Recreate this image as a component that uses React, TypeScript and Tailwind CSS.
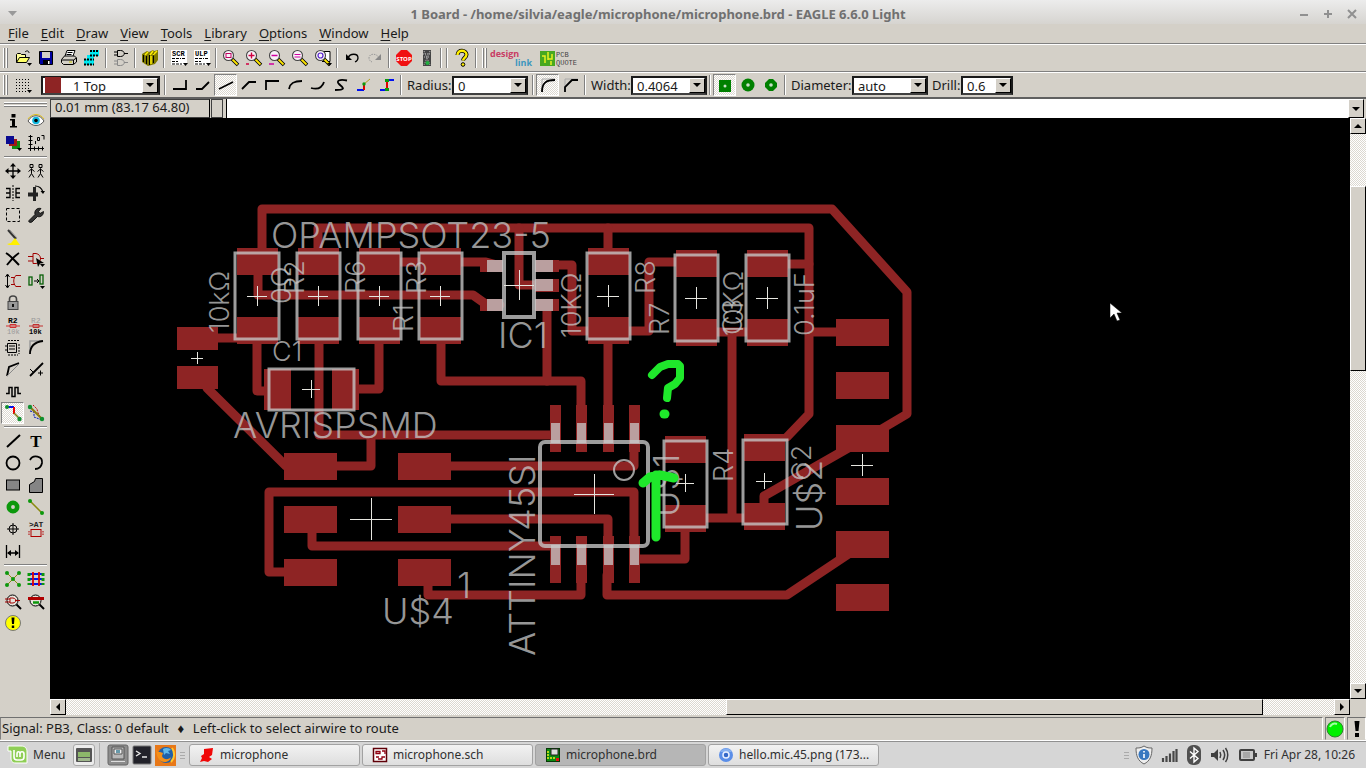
import type { ReactNode } from 'react';

const raised = 'border border-t-white border-l-white border-r-black border-b-black bg-[#d4d0c8]';
const dither = 'bg-[repeating-conic-gradient(#ffffff_0%_25%,#dcd8d0_0%_50%)] bg-[length:2px_2px]';

function Icon({ children }: { children: ReactNode }) {
  return (
    <svg width="20" height="20" viewBox="0 0 20 20" fill="none" stroke="#000" className="shrink-0" aria-hidden="true">
      {children}
    </svg>
  );
}

function ToolButton({ label, active, children }: { label: string; active?: boolean; children: ReactNode }) {
  return (
    <button
      type="button"
      aria-label={label}
      className={
        'flex h-[22px] w-[23px] shrink-0 items-center justify-center ' +
        (active ? 'border border-t-[#808080] border-l-[#808080] border-r-white border-b-white ' + dither : '')
      }
    >
      <Icon>{children}</Icon>
    </button>
  );
}

function Sep() {
  return (
    <div className="flex w-[6px] shrink-0 justify-center">
      <div className="h-5 border-l border-l-[#808080] border-r border-r-white"></div>
    </div>
  );
}

function Handle() {
  return (
    <div className="flex h-5 w-[11px] shrink-0 gap-px pl-[3px]">
      <div className="w-[2px] border-r border-r-[#808080] bg-white"></div>
      <div className="w-[2px] border-r border-r-[#808080] bg-white"></div>
    </div>
  );
}

function Combo({ id, label, value, width, swatch }: { id: string; label: string; value: string; width: string; swatch?: boolean }) {
  return (
    <div className={'flex h-[19px] shrink-0 items-center border-2 border-[#1a1a1a] border-b-[#404040] bg-white ' + width}>
      {swatch && <span className="ml-[2px] h-4 w-4 shrink-0 bg-[#8e2424]"></span>}
      <select
        id={id}
        aria-label={label}
        className={'h-full min-w-0 flex-1 appearance-none bg-transparent outline-none ' + (swatch ? 'pl-3' : 'pl-1')}
      >
        <option>{value}</option>
      </select>
      <span className={'flex h-full w-4 shrink-0 items-center justify-center ' + raised}>
        <svg width="8" height="4" viewBox="0 0 8 4" aria-hidden="true"><path d="M0 0h8L4 4z" /></svg>
      </span>
    </div>
  );
}

function Lens({ children }: { children?: ReactNode }) {
  return (
    <>
      <path d="M11 11l6 6" stroke="#000" strokeWidth="3.6" />
      <path d="M11.5 11.5l5 5" stroke="#ffe600" strokeWidth="1.8" />
      <circle cx="7.5" cy="7.5" r="5" fill="#f8f2f8" stroke="#444" strokeWidth="1.1" />
      {children}
    </>
  );
}

const dropMark = <path d="M14 15h5l-2.5 3z" fill="#000" stroke="none" />;

const fileTools: { label: string; art: ReactNode }[][] = [
  [
    { label: 'Open', art: <><path d="M3.5 14.5v-8l1-1h3l1 1h4v2.5" fill="#ffff99" /><path d="M3.5 14.5l3-5h10l-3 5z" fill="#ffff66" /><path d="M12 4c2-2 4-1 4 1" />{dropMark}</> },
    { label: 'Save', art: <><path d="M3.5 3.500h13v13h-12l-1-1z" fill="#0000a0" /><path d="M6 4h8v6H6z" fill="#d4d0c8" stroke="none" /><path d="M7 12h7v4H7z" fill="#000" stroke="none" /><path d="M12 13h1.5v3H12z" fill="#fff" stroke="none" /></> },
    { label: 'Print', art: <><path d="M6 8l2-5.500h8L14 8" fill="#fff" /><path d="M2.500 11.500l3-3.500h10l2 2v4l-3 2.500h-10l-2-2z" fill="#d4d0c8" /><path d="M3 12h11.500l3-2M14.500 12v4M8.500 4.500h5M7.500 6.500h5" /><path d="M10 14h3" stroke="#c8c800" /></> },
    { label: 'CAM Processor', art: <><path d="M8 2h9v6H8zM2 11h10v6H2zM5 7h7v4H5z" fill="#00e8f0" stroke="none" /><path d="M8 3h9M8 7.500h9M2 11.500h10M2 16.500h10" strokeWidth="2" strokeDasharray="2 1" /></> },
  ],
  [{ label: 'Schematic', art: <><path d="M6.500 2.500h3c5 0 5 6 0 6h-3zM3 4h3M3 7h3M13 5.500h4" /><path d="M6.500 11.500h3c5 0 5 6 0 6h-3zM3 13h3M3 16h3M13 14.500h4" stroke="#888" /></> }],
  [{ label: 'Library', art: <><path d="M2 6l5-3 2 1 4-2 1 1 4-1v10l-3 4-7 2-6-4z" fill="#807a00" stroke="none" /><path d="M3.500 7v7M6.500 8v8M9.500 7v10M13.500 5v10" /><path d="M8 4l-3 3M13 3l-3 4M17 3l-4 4M11 8v8" stroke="#ffee00" strokeWidth="1.500" /></> }],
  [
    { label: 'Run script', art: <><rect x="2" y="2" width="16" height="15" fill="#fff" stroke="none" /><text x="3" y="8" fontSize="7" fontWeight="700" fill="#000" stroke="none" fontFamily="Liberation Mono, monospace">SCR</text><path d="M3 10.500h9M13 10.500h3M3 13.500h6M3 16h10" strokeDasharray="3 1" />{dropMark}</> },
    { label: 'Run ULP', art: <><rect x="2" y="2" width="16" height="15" fill="#fff" stroke="none" /><text x="3" y="8" fontSize="7" fontWeight="700" fill="#000" stroke="none" fontFamily="Liberation Mono, monospace">ULP</text><path d="M3 10.500h9M13 10.500h3M3 13.500h6M3 16h10" strokeDasharray="3 1" />{dropMark}</> },
  ],
  [
    { label: 'Zoom to fit', art: <Lens><rect x="5" y="5.500" width="5" height="4" stroke="#c00060" /></Lens> },
    { label: 'Zoom in', art: <Lens><path d="M7.500 4.500v6M4.500 7.500h6M2 16h3" stroke="#d00040" strokeWidth="1.400" /></Lens> },
    { label: 'Zoom out', art: <Lens><path d="M4.500 7.500h6M2 16h5" stroke="#d000a0" strokeWidth="1.400" /></Lens> },
    { label: 'Zoom redraw', art: <Lens><path d="M4.500 6.500h6M4.500 9h6" stroke="#d000a0" strokeWidth="1.200" /></Lens> },
    { label: 'Zoom select', art: <><path d="M9 3.500h8v10H9" fill="#fff" /><Lens><circle cx="7.500" cy="7.500" r="2.500" stroke="#5522cc" strokeWidth="1.200" /></Lens>{dropMark}</> },
  ],
  [
    { label: 'Undo', art: <><path d="M6 10c2-5 10-5 10 0 0 2-1 3-3 4" strokeWidth="1.300" /><path d="M4 6v6h6z" fill="#000" stroke="none" /></> },
    { label: 'Redo', art: <><path d="M14 10c-2-5-10-5-10 0 0 2 1 3 3 4" stroke="#999" strokeDasharray="1.500 1" /><path d="M16 6v6h-6z" fill="#888" stroke="none" /></> },
  ],
  [
    { label: 'Stop', art: <><path d="M7 2h6l5 5v6l-5 5H7l-5-5V7z" fill="#f01010" stroke="none" /><text x="10" y="12.500" textAnchor="middle" fontSize="6" fontWeight="700" fill="#fff" stroke="none" fontFamily="Open Sans, sans-serif">STOP</text></> },
    { label: 'Go', art: <><rect x="6" y="2" width="8" height="16" fill="#444" stroke="none" /><path d="M7 3l6 14M13 3L7 17M7 9h6M6 6h8" stroke="#bbb" strokeDasharray="1 1" /><circle cx="10.500" cy="15" r="2" fill="#22b040" stroke="none" /></> },
  ],
];

const wireTools: { label: string; d: string }[] = [
  { label: 'Wire bend 0', d: 'M3 14h13V5' },
  { label: 'Wire bend 1', d: 'M3 14h6l7-7' },
  { label: 'Wire bend 2', d: 'M3 14l14-7' },
  { label: 'Wire bend 3', d: 'M3 14l7-7h7' },
  { label: 'Wire bend 4', d: 'M4 15V6h13' },
  { label: 'Wire bend 5', d: 'M4 14c1-6 5-8 13-8' },
  { label: 'Wire bend 6', d: 'M3 13c7 2 11 0 13-6' },
  { label: 'Freehand', d: 'M16 5.500C8 4 5 6 8 9s9 6-4 6' },
];

const sideTools: { label: string; art: ReactNode; active?: boolean }[][] = [
  [
    { label: 'Info', art: <><rect x="8.500" y="3" width="4" height="3.500" fill="#000" stroke="none" /><path d="M7 8h5v7h2v1.500H7V15h2V9.500H7z" fill="#000" stroke="none" /></> },
    { label: 'Show', art: <><path d="M2 10c4-7 12-7 16 0-4 6-12 6-16 0z" fill="#fff" stroke="#555" /><path d="M2 8c4-6 12-6 16 0" stroke="#e0c020" /><circle cx="10" cy="9.500" r="3.800" fill="#10b8e0" stroke="none" /><circle cx="10" cy="9.500" r="1.800" fill="#000" stroke="none" /></> },
    { label: 'Display layers', art: <><rect x="9" y="8" width="8" height="8" fill="#128a12" stroke="none" /><rect x="6" y="6" width="8" height="7" fill="#a01818" stroke="none" /><rect x="3" y="3" width="8" height="8" fill="#0a0a90" stroke="none" />{dropMark}</> },
    { label: 'Mark', art: <><path d="M4.500 2v16M2.500 3.500h4M2.500 7.500h4M2.500 11.500h4M2 15.500h16M8.500 13.500v4M12.500 13.500v4M16.500 13.500v4" /><path d="M9.500 8v3M11.500 4.500h2v3h-2zM15.500 2.500h2.500v4" /></> },
  ],
  [
    { label: 'Move', art: <><path d="M10 4v12M4 10h12" strokeWidth="1.300" /><path d="M10 2l3 3.500H7zM10 18l3-3.500H7zM2 10l3.500 3V7zM18 10l-3.500 3V7z" fill="#000" stroke="none" /></> },
    { label: 'Copy', art: <path d="M5.500 7.500v5l-2.500 4M5.500 12.500l2.500 4M2.500 10.500L5.500 8l3 2.500M14.500 7.500v5l-2.500 4M14.500 12.500l2.500 4M11.500 10.500l3-2.500 3 2.500M4 3.500h3v3H4zM13 3.500h3v3h-3z" /> },
    { label: 'Mirror', art: <><path d="M3 5.500h4v9H3M3 10h4M17 5.500h-4v9h4M17 10h-4" strokeWidth="1.300" /><path d="M10 2v16" strokeDasharray="2 1" /></> },
    { label: 'Rotate', art: <><path d="M2 9.500h10v4H2z" fill="#222" stroke="none" /><path d="M7 4h3v14H7z" fill="#222" stroke="none" /><path d="M9 3c5 0 7 3 8 6" strokeWidth="1.200" /><path d="M14.500 8h4.500l-2 3z" fill="#000" stroke="none" /></> },
    { label: 'Group', art: <rect x="3.500" y="3.500" width="13" height="13" strokeDasharray="3 2" /> },
    { label: 'Change', art: <path d="M3 15.500l6-6c-1-4 2-7 6-6l-2.500 3 1.500 2 3.500-2c0 4-3 6-6 5L6 17c-2 1-4 0-3-1.500z" fill="#333" strokeWidth=".8" /> },
    { label: 'Paste', art: <><path d="M5 3l8 9" stroke="#333" strokeWidth="2" /><path d="M7 3l7 8" stroke="#999" /><path d="M4 17l4-1 4-5 5 7H6z" fill="#fff000" stroke="none" /></> },
    { label: '', art: null },
    { label: 'Delete', art: <path d="M3 4c5 3 8 7 13 12M16 4C11 7 8 11 4 16" strokeWidth="2" /> },
    { label: 'Add', art: <><path d="M7 4.500h3c6 1 6 9 0 10H7zM2 7.500h5M2 12h5M14 9.500h4" stroke="#a00000" /><path d="M10 9l8 5-4 .5-2 3.500z" fill="#000" stroke="none" />{dropMark}</> },
    { label: 'Pinswap', art: <><path d="M4.500 4v12M2.500 6l2-3 2 3M2.500 14l2 3 2-3" /><path d="M18 4.500h-5c-3 2-3 9 0 11h5M8 6.500h4M8 13.500h4" stroke="#a00000" /></> },
    { label: 'Replace', art: <><rect x="3" y="6" width="3" height="8" stroke="#075f07" strokeWidth="1.300" /><rect x="14" y="4" width="3" height="9" stroke="#075f07" strokeWidth="1.300" /><path d="M8 10h5M11 8l2 2-2 2" />{dropMark}</> },
    { label: 'Lock', art: <><path d="M6.500 9V6c0-4 7-4 7 0v3" stroke="#444" strokeWidth="1.600" /><rect x="5" y="8.500" width="10" height="8" fill="#999" stroke="#444" /><path d="M10 11v3" stroke="#111" strokeWidth="2" /></> },
    { label: '', art: null },
    { label: 'Name', art: <><text x="5" y="8" fontSize="8" fontWeight="700" fill="#000" stroke="none" fontFamily="Liberation Mono, monospace">R2</text><path d="M3 11h14M7 9.500h6v3H7z" stroke="#d03030" /><text x="4" y="19" fontSize="7" fill="#999" stroke="none" fontFamily="Liberation Mono, monospace">10k</text></> },
    { label: 'Value', art: <><text x="5" y="8" fontSize="8" fill="#999" stroke="none" fontFamily="Liberation Mono, monospace">R2</text><path d="M3 11h14M7 9.500h6v3H7z" stroke="#c03030" /><text x="3" y="19" fontSize="7" fontWeight="700" fill="#000" stroke="none" fontFamily="Liberation Mono, monospace">10k</text></> },
    { label: 'Smash', art: <><path d="M4.500 6.500h9v9h-9zM4 9h-2M4 13h-2M6 9h6M6 12h6" /><path d="M5 3.500h11M16 7v10M5 18h10" strokeDasharray="2 1" /></> },
    { label: 'Miter', art: <><path d="M4 17V4h13" stroke="#999" strokeWidth="1.500" /><path d="M4 17C4 9 9 5 17 4" strokeWidth="1.800" /></> },
    { label: 'Split', art: <><path d="M4 17l2-9 10-4" strokeWidth="1.800" /><path d="M4 17L16 5" stroke="#888" /></> },
    { label: 'Optimize', art: <><path d="M4 17L17 4" strokeWidth="1.800" /><path d="M4 10l3 3M12 14h5M14.500 11.500v5" /></> },
    { label: 'Meander', art: <path d="M3 12.500h3v-6h3v9h3v-9h3v6h3" strokeWidth="1.500" /> },
    { label: '', art: null },
    { label: 'Route', active: true, art: <><path d="M4 4h7" stroke="#0010f0" strokeWidth="2" /><path d="M11 4v7" stroke="#f00000" strokeWidth="2" /><path d="M11 10l6 6" stroke="#7a7a10" strokeWidth="1.500" /><circle cx="4" cy="4" r="2" fill="#109030" stroke="none" /><circle cx="16.500" cy="16" r="2.200" fill="#109030" stroke="none" /></> },
    { label: 'Ripup', art: <><path d="M4 8l4 1v5l8 3" stroke="#0010c0" strokeDasharray="2 1" /><path d="M7 2l4 4 1 4 3 5" stroke="#c01010" strokeDasharray="2 1" /><path d="M4 4l12 12" stroke="#8a7a10" strokeWidth="2" /><circle cx="4" cy="4" r="2.200" fill="#109030" stroke="none" /><circle cx="16" cy="16" r="2.200" fill="#109030" stroke="none" /></> },
  ],
  [
    { label: 'Wire', art: <path d="M4 16L17 4" strokeWidth="2" /> },
    { label: 'Text', art: <text x="10" y="16" textAnchor="middle" fontSize="17" fontWeight="700" fill="#000" stroke="none" fontFamily="Liberation Serif, serif">T</text> },
    { label: 'Circle', art: <circle cx="10" cy="10" r="6.500" strokeWidth="1.800" /> },
    { label: 'Arc', art: <path d="M4 7c3-6 13-4 12 3-1 5-5 6-7 6" strokeWidth="1.800" /> },
    { label: 'Rect', art: <rect x="3.500" y="5" width="13" height="10" fill="#858585" /> },
    { label: 'Polygon', art: <path d="M3.500 17.500v-8l5-3 1-3h7v14z" fill="#858585" /> },
    { label: 'Via', art: <circle cx="10" cy="10" r="4.200" stroke="#0c980c" strokeWidth="4.500" /> },
    { label: 'Signal', art: <><path d="M4 4l12 12" stroke="#8a8a10" strokeWidth="1.500" /><circle cx="4" cy="4" r="2" fill="#0c980c" stroke="none" /><circle cx="16" cy="16" r="2" fill="#0c980c" stroke="none" /></> },
    { label: 'Hole', art: <><circle cx="10" cy="10" r="4" /><path d="M10 4v12M4 10h12" /></> },
    { label: 'Attribute', art: <><text x="3" y="8" fontSize="8" fontWeight="700" fill="#222" stroke="none" fontFamily="Liberation Mono, monospace">&gt;AT</text><rect x="5" y="10.500" width="10" height="7" stroke="#b00000" /><path d="M3 12v5M17 12v5" stroke="#b00000" strokeDasharray="1.500 1" /></> },
    { label: 'Dimension', art: <><path d="M3.500 4v13M16.500 4v13M5 12h10" strokeWidth="1.300" /><path d="M4 12l4-3v6zM16 12l-4-3v6z" fill="#000" stroke="none" /></> },
    { label: '', art: null },
  ],
  [
    { label: 'Ratsnest', art: <><path d="M4 4l12 12M16 4L4 16" stroke="#8a8a10" />{[[4, 4], [16, 4], [10, 10], [4, 16], [16, 16]].map(([x, y]) => <circle key={x + '-' + y} cx={x} cy={y} r="2" fill="#0c980c" stroke="none" />)}</> },
    { label: 'Auto', art: <><path d="M3 5h14M3 10h14M3 15h14" stroke="#0010f0" strokeWidth="1.800" /><path d="M7 3v14M13 3v14" stroke="#e00000" strokeWidth="1.800" /><path d="M3 4v12M17 4v12" stroke="#0c980c" strokeWidth="3" strokeDasharray="3 2" /></> },
    { label: 'ERC', art: <><path d="M13 13l5 5" strokeWidth="2" /><circle cx="9.500" cy="9.500" r="5.500" fill="#e8e4dc" /><path d="M7 7h3c4 1 4 4 0 5H7zM2 8h5M2 11h5M12 9.500h5" stroke="#a00000" /></> },
    { label: 'DRC', art: <><path d="M13 13l5 5" strokeWidth="2" /><circle cx="9.500" cy="9.500" r="5.500" fill="#e8e4dc" /><path d="M2 7.500h16" stroke="#b00000" strokeWidth="3" /><path d="M7 11.500h6" stroke="#0c980c" strokeWidth="2.500" /></> },
    { label: 'Errors', art: <><circle cx="10" cy="10" r="7.500" fill="#ffff00" stroke="#777" /><path d="M8.500 4.500h3l-.5 6.500H9zM8.800 12.500h2.400v2.400H8.800z" fill="#000" stroke="none" /></> },
    { label: '', art: null },
  ],
];

const traces = [
  'M262 252V209H832L907 292V414L880 430',
  'M318 252V228H809V414L787 437',
  'M608 228V252M519 228V285H550',
  'M258 270V295H473L487 305H500',
  'M395 262H425M455 262H486L497 265',
  'M545 265H572V331H590M547 307V381',
  'M441 340V381H581V410M608 340V420',
  'M628 331H649V262H678',
  'M715 332H750M732 332V518M704 518H748',
  'M787 264H809M809 332H840',
  'M215 338H238M257 340V391H268M379 340V389H357',
  'M319 340V435H552M371 436V466H335',
  'M207 384V388L286 466',
  'M449 466H634V445',
  'M286 572H269V492H634V545',
  'M449 519H608V545',
  'M312 530V546H555',
  'M428 583V595H581V575',
  'M607 575V595H787L850 553',
  'M636 559H685V528',
  'M850 447L764 496V508',
];

// x, y, width, height
const pads = [
  [177, 327, 41, 23], [177, 366, 41, 23],
  [237, 248, 41, 27], [237, 317, 41, 27], [298, 248, 41, 27], [298, 317, 41, 27],
  [359, 248, 41, 27], [359, 317, 41, 27], [420, 248, 41, 27], [420, 317, 41, 27],
  [588, 248, 41, 27], [588, 317, 41, 27], [676, 250, 41, 27], [676, 319, 41, 27],
  [747, 250, 41, 27], [747, 319, 41, 27], [264, 369, 27, 41], [332, 369, 27, 41],
  [665, 436, 41, 27], [665, 505, 41, 27], [744, 434, 41, 27], [744, 503, 41, 27],
  [284, 453, 53, 27], [284, 506, 53, 27], [284, 559, 53, 27],
  [398, 453, 53, 27], [398, 506, 53, 27], [398, 559, 53, 27],
  [836, 319, 53, 27], [836, 372, 53, 27], [836, 425, 53, 27], [836, 478, 53, 27], [836, 531, 53, 27], [836, 584, 53, 27],
  [480, 260, 23, 12], [480, 299, 23, 12], [535, 260, 24, 12], [535, 279, 24, 13], [535, 299, 24, 12],
  [550, 405, 11, 47], [576, 405, 11, 47], [603, 405, 11, 47], [629, 405, 11, 47],
  [550, 536, 11, 47], [576, 536, 11, 47], [603, 536, 11, 47], [629, 536, 11, 47],
];

const pins = [
  [487, 260, 16, 12], [487, 299, 16, 12], [535, 260, 18, 12], [535, 279, 18, 12], [535, 299, 18, 12],
  [551, 423, 9, 20], [577, 423, 9, 20], [604, 423, 9, 20], [630, 423, 9, 20],
  [551, 545, 9, 20], [577, 545, 9, 20], [604, 545, 9, 20], [630, 545, 9, 20],
];

const outlines = [
  [235, 253, 44, 86], [297, 253, 43, 86], [358, 253, 43, 86], [419, 253, 43, 86],
  [587, 253, 43, 86], [675, 255, 43, 86], [746, 255, 43, 86], [269, 369, 85, 41],
  [664, 441, 43, 86], [743, 440, 44, 84],
];

// x, y, arm length
const crosses = [
  [257, 296, 10], [318, 296, 10], [379, 296, 10], [440, 296, 10], [197, 358, 6], [311, 389, 9],
  [519, 285, 15], [608, 296, 11], [696, 298, 11], [767, 298, 11], [594, 494, 20], [371, 519, 21],
  [685, 483, 9], [764, 481, 8], [862, 465, 11],
];

const labels: { text: string; x: number; y: number; size: number; up?: boolean }[] = [
  { text: 'OPAMPSOT23-5', x: 271, y: 248, size: 36 },
  { text: 'AVRISPSMD', x: 233, y: 438, size: 36 },
  { text: 'IC1', x: 498, y: 348, size: 36 },
  { text: 'U$4', x: 382, y: 624, size: 36 },
  { text: '1', x: 457, y: 598, size: 36 },
  { text: 'C1', x: 272, y: 361, size: 27 },
  { text: 'ATTINY45SI', x: 535, y: 656, size: 36, up: true },
  { text: '10kΩ', x: 229, y: 333, size: 27, up: true },
  { text: '0Ω', x: 291, y: 304, size: 27, up: true },
  { text: 'R2', x: 304, y: 294, size: 27, up: true },
  { text: 'R6', x: 365, y: 294, size: 27, up: true },
  { text: 'R3', x: 426, y: 294, size: 27, up: true },
  { text: 'R1', x: 413, y: 332, size: 27, up: true },
  { text: '10KΩ', x: 581, y: 338, size: 27, up: true },
  { text: 'R8', x: 655, y: 294, size: 27, up: true },
  { text: 'R7', x: 669, y: 335, size: 27, up: true },
  { text: '10KΩ', x: 743, y: 336, size: 27, up: true },
  { text: 'C3', x: 742, y: 335, size: 27, up: true },
  { text: '0.1uF', x: 814, y: 336, size: 27, up: true },
  { text: 'R4', x: 733, y: 482, size: 27, up: true },
  { text: 'U$1', x: 679, y: 517, size: 36, up: true },
  { text: 'C2', x: 811, y: 481, size: 27, up: true },
  { text: 'U$2', x: 822, y: 531, size: 36, up: true },
];

function Board() {
  return (
    <svg viewBox="50 118 1300 581" preserveAspectRatio="xMinYMin meet" className="h-full w-full" role="img" aria-label="Board layout">
      <g fill="none" stroke="#8e2424" strokeWidth="9" strokeLinecap="round" strokeLinejoin="round">
        {traces.map((d) => <path key={d} d={d} />)}
      </g>
      <g fill="#8e2424">
        {pads.map(([x, y, w, h], i) => <rect key={i} x={x} y={y} width={w} height={h} />)}
      </g>
      <g fill="#c8c8c8" fillOpacity=".75">
        {pins.map(([x, y, w, h], i) => <rect key={i} x={x} y={y} width={w} height={h} />)}
      </g>
      <g fill="none" stroke="#c8c8c8" strokeOpacity=".78" strokeWidth="3">
        {outlines.map(([x, y, w, h], i) => <rect key={i} x={x} y={y} width={w} height={h} />)}
        <rect x="504" y="253" width="30" height="64" strokeWidth="4" />
        <rect x="540" y="442" width="108" height="104" rx="5" strokeWidth="4" />
        <circle cx="624" cy="470" r="10" strokeWidth="2" />
      </g>
      <g stroke="#e6e6e0" strokeWidth="1" shapeRendering="crispEdges">
        {crosses.map(([x, y, r], i) => <path key={i} d={`M${x - r} ${y}H${x + r}M${x} ${y - r}V${y + r}`} />)}
      </g>
      <g fill="#c8c8c8" fillOpacity=".75" fontFamily="Inter, 'Liberation Sans', sans-serif" fontWeight="300">
        {labels.map((l, i) => (
          <text key={i} x={l.x} y={l.y} fontSize={l.size} transform={l.up ? `rotate(-90 ${l.x} ${l.y})` : undefined}>
            {l.text}
          </text>
        ))}
      </g>
      <g fill="none" stroke="#1fe82b" strokeWidth="8" strokeLinecap="round" strokeLinejoin="round">
        <path d="M652 375L660 367L668 364H678L680 366V378L675 384L668 388L667 398" />
        <path d="M656 537V475M643 483L650 477L660 475L674 478" strokeWidth="9" />
        <path d="M664 414h1" strokeWidth="9" />
      </g>
      <path d="M1110 303v15l4-4 3 7 3-1-3-7h5z" fill="#fff" stroke="#000" strokeWidth=".5" />
    </svg>
  );
}

const menus = ['File', 'Edit', 'Draw', 'View', 'Tools', 'Library', 'Options', 'Window', 'Help'];

function TaskButton({ label, active, children }: { label: string; active?: boolean; children: ReactNode }) {
  return (
    <button
      type="button"
      className={
        'flex h-[22px] w-[171px] items-center gap-[3px] rounded-[3px] border border-[#a2a2a2] pl-[7px] ' +
        (active ? 'bg-[#b6b6b6]' : 'bg-linear-to-b from-[#f2f2f2] to-[#dedede]')
      }
    >
      <Icon>{children}</Icon>
      <span className="whitespace-nowrap">{label}</span>
    </button>
  );
}

export default function App() {
  return (
    <div className="flex h-screen flex-col overflow-hidden bg-[#d4d0c8] font-['Noto_Sans',sans-serif] text-[13px] leading-4 text-[#1a1a1a]">
      {/* Title bar */}
      <header className="flex h-6 shrink-0 items-center bg-linear-to-b from-[#ececec] to-[#d6d4d0] px-2 pt-[3px] text-[#707070]">
        <svg width="10" height="6" viewBox="0 0 10 6" fill="#999" aria-hidden="true"><path d="M0 0h9L4.500 5z" /></svg>
        <h1 className="flex-1 pr-4 pl-4 text-center font-bold">1 Board - /home/silvia/eagle/microphone/microphone.brd - EAGLE 6.6.0 Light</h1>
        <div className="flex gap-3">
          {[
            ['Minimize', 'M2 7h8'],
            ['Maximize', 'M2 6h8M6 2v8'],
            ['Close', 'M2 2l8 8M10 2l-8 8'],
          ].map(([label, d]) => (
            <button key={label} type="button" aria-label={label}>
              <svg width="12" height="12" viewBox="0 0 12 12" stroke="#909090" strokeWidth="2"><path d={d} /></svg>
            </button>
          ))}
        </div>
      </header>

      {/* Menu bar */}
      <nav className="flex h-5 shrink-0 items-center gap-3 border-b border-b-[#808080] pb-[2px] pl-2">
        {menus.map((m) => (
          <button key={m} type="button"><span className="underline underline-offset-2">{m[0]}</span>{m.slice(1)}</button>
        ))}
      </nav>

      {/* Action toolbar */}
      <div className="flex h-7 shrink-0 items-center border-t border-t-white border-b border-b-[#808080]">
        <Handle />
        {fileTools.map((group, i) => (
          <div key={i} className="flex items-center">
            {i > 0 && <Sep />}
            {group.map((t) => <ToolButton key={t.label} label={t.label}>{t.art}</ToolButton>)}
          </div>
        ))}
        <Sep />
        <Sep />
        <ToolButton label="Help">
          <path d="M5.500 7c0-6 9-5 9-.5 0 3-3 3-3.500 6" stroke="#000" strokeWidth="4" />
          <path d="M5.500 7c0-6 9-5 9-.5 0 3-3 3-3.500 6" stroke="#ffee00" strokeWidth="2.400" />
          <circle cx="11" cy="16.500" r="1.800" fill="#ffee00" />
        </ToolButton>
        <Sep />
        <Handle />
        <a href="#designlink" aria-label="design link">
          <svg width="44" height="24" viewBox="0 0 44 24" fontFamily="Open Sans, sans-serif" fontWeight="700" fontSize="9">
            <text x="0" y="11" fill="#c83c64">design</text>
            <text x="25" y="20" fill="#3c96be">link</text>
          </svg>
        </a>
        <a href="#pcbquote" aria-label="PCB Quote" className="ml-[6px]">
          <svg width="38" height="20" viewBox="0 0 38 20">
            <rect x="0" y="3" width="15" height="15" fill="#48a820" />
            <path d="M2 8h3v7M8 4v8M12 6v5h-4M11 17v-4" stroke="#e8f020" strokeWidth="1.500" fill="none" />
            <text x="16" y="9" fontSize="7" fill="#444" fontFamily="Liberation Mono, monospace">PCB</text>
            <text x="16" y="17" fontSize="7" fill="#444" fontFamily="Liberation Mono, monospace">QUOTE</text>
          </svg>
        </a>
      </div>

      {/* Parameter toolbar */}
      <div className="flex h-[27px] shrink-0 items-center border-t border-t-white border-b-2 border-b-[#606060]">
        <Handle />
        <ToolButton label="Grid">
          <path d="M3 4.500h14M3 7.500h14M3 10.500h14M3 13.500h14M3 16.500h10" strokeDasharray="1 2" />
          {dropMark}
        </ToolButton>
        <div className="w-[7px] shrink-0"></div>
        <Combo id="layer" label="Layer" value="1 Top" width="w-[119px]" swatch />
        <div className="w-[2px] shrink-0"></div>
        <Sep />
        {wireTools.map((t, i) => (
          <ToolButton key={t.label} label={t.label} active={i === 2}><path d={t.d} strokeWidth="1.800" /></ToolButton>
        ))}
        <ToolButton label="Route style 1">
          <path d="M3 15h7" stroke="#0010f0" strokeWidth="2" /><path d="M10 15V9" stroke="#e00000" strokeWidth="2" />
          <path d="M10 9l6-5" stroke="#b0a020" /><circle cx="10" cy="9" r="1.700" fill="#0c980c" stroke="none" />
        </ToolButton>
        <ToolButton label="Route style 2">
          <path d="M3 15h7M10 5h7" stroke="#0010f0" strokeWidth="2" /><path d="M10 15V5" stroke="#e00000" strokeWidth="2" />
          <path d="M8 4h4v3H8zM8 13h4v3H8z" fill="#0c980c" stroke="none" />
        </ToolButton>
        <Sep />
        <label htmlFor="radius" className="w-12 shrink-0 pl-[3px]">Radius:</label>
        <Combo id="radius" label="Radius" value="0" width="w-[76px]" />
        <div className="w-[2px] shrink-0"></div>
        <Sep />
        <ToolButton label="Round miter" active><path d="M4 17V4h13" stroke="#aaa" /><path d="M4 17c0-9 4-12 13-12" strokeWidth="1.800" /></ToolButton>
        <ToolButton label="Straight miter"><path d="M4 17V4h13" stroke="#aaa" /><path d="M4 17v-5l7-7h6" strokeWidth="1.800" /></ToolButton>
        <Sep />
        <label htmlFor="width" className="w-[43px] shrink-0 pl-[3px]">Width:</label>
        <Combo id="width" label="Width" value="0.4064" width="w-[76px]" />
        <Sep />
        <ToolButton label="Square via" active><path d="M4 5h12v12H4z" fill="#008000" stroke="none" /><circle cx="10" cy="11" r="1.500" fill="#c8e0c8" stroke="none" /></ToolButton>
        <ToolButton label="Round via"><circle cx="10" cy="10" r="6.500" fill="#008000" stroke="none" /><circle cx="10" cy="10" r="1.800" fill="#c8e0c8" stroke="none" /></ToolButton>
        <ToolButton label="Octagon via"><path d="M8 4h4l4 4v4l-4 4H8l-4-4V8z" fill="#008000" stroke="none" /><circle cx="10" cy="10" r="1.800" fill="#c8e0c8" stroke="none" /></ToolButton>
        <Sep />
        <label htmlFor="diameter" className="w-16 shrink-0 pl-[3px]">Diameter:</label>
        <Combo id="diameter" label="Diameter" value="auto" width="w-[76px]" />
        <label htmlFor="drill" className="w-[33px] shrink-0 pl-1">Drill:</label>
        <Combo id="drill" label="Drill" value="0.6" width="w-[52px]" />
      </div>

      <div className="flex min-h-0 flex-1">
        {/* Command palette */}
        <aside className="flex w-[50px] shrink-0 flex-col pl-px">
          <div className="mx-[3px] mt-[3px] mb-[3px] flex flex-col gap-px">
            <div className="h-[2px] border-b border-b-[#808080] bg-white"></div>
            <div className="h-[2px] border-b border-b-[#808080] bg-white"></div>
          </div>
          {sideTools.map((group, i) => (
            <div key={i}>
              {i > 0 && <div className="mx-[3px] my-[2px] h-[2px] border-b border-b-white bg-[#808080]"></div>}
              <div className="grid grid-cols-[23px_23px]">
                {group.map((t, j) =>
                  t.art ? <ToolButton key={j} label={t.label} active={t.active}>{t.art}</ToolButton> : <span key={j} className="h-[22px]"></span>
                )}
              </div>
            </div>
          ))}
        </aside>

        <div className="flex min-w-0 flex-1 flex-col">
          {/* Coordinates and command line */}
          <div className="flex h-[19px] shrink-0 items-stretch">
            <output className="w-[160px] shrink-0 border border-t-[#404040] border-l-[#404040] border-b-[#404040] border-r-black pl-1 leading-[15px]">0.01 mm (83.17 64.80)</output>
            <button type="button" aria-label="Command history" className="mx-px w-3 border border-[#404040]"></button>
            <div className="ml-[2px] flex min-w-0 flex-1 items-stretch border-l border-black bg-white">
              <input aria-label="Command" className="min-w-0 flex-1 px-1 outline-none" />
              <button type="button" aria-label="Recent commands" className={'flex w-4 items-center justify-center ' + raised}>
                <svg width="8" height="4" viewBox="0 0 8 4" aria-hidden="true"><path d="M0 0h8L4 4z" /></svg>
              </button>
              <div className="w-[2px] bg-[#d4d0c8]"></div>
            </div>
          </div>

          <div className="flex min-h-0 flex-1">
            <main className="min-w-0 flex-1 overflow-hidden bg-black"><Board /></main>
            <div className={'flex w-4 shrink-0 flex-col ' + dither}>
              <button type="button" aria-label="Scroll up" className={'flex h-4 items-center justify-center ' + raised}>
                <svg width="8" height="4" viewBox="0 0 8 4"><path d="M0 4h8L4 0z" /></svg>
              </button>
              <div className="grow-[52] basis-0"></div>
              <div className={'grow-[184] basis-0 ' + raised}></div>
              <div className="grow-[313] basis-0"></div>
              <button type="button" aria-label="Scroll down" className={'flex h-4 items-center justify-center ' + raised}>
                <svg width="8" height="4" viewBox="0 0 8 4"><path d="M0 0h8L4 4z" /></svg>
              </button>
            </div>
          </div>

          <div className="flex h-4 shrink-0 pr-4">
            <div className={'flex flex-1 ' + dither}>
              <button type="button" aria-label="Scroll left" className={'flex w-4 items-center justify-center ' + raised}>
                <svg width="4" height="8" viewBox="0 0 4 8"><path d="M4 0v8L0 4z" /></svg>
              </button>
              <div className="grow-[661] basis-0"></div>
              <div className={'grow-[536] basis-0 ' + raised}></div>
              <div className="grow-[71] basis-0"></div>
              <button type="button" aria-label="Scroll right" className={'flex w-4 items-center justify-center ' + raised}>
                <svg width="4" height="8" viewBox="0 0 4 8"><path d="M0 0v8l4-4z" /></svg>
              </button>
            </div>
          </div>
        </div>
      </div>

      {/* Status bar */}
      <div className="mt-[2px] flex h-6 shrink-0 items-stretch gap-[2px] border-b border-b-white">
        <div className="flex flex-1 items-center border border-t-[#707070] border-l-[#808080] border-r-white border-b-transparent pb-[2px] pl-px">
          <span>Signal: PB3, Class: 0 default</span>
          <span className="w-6 text-center">♦</span>
          <span>Left-click to select airwire to route</span>
        </div>
        <div className="flex w-5 items-center justify-center border border-t-[#707070] border-l-[#808080] border-r-white border-b-transparent">
          <svg width="18" height="18" viewBox="0 0 18 18"><circle cx="9" cy="9" r="8" fill="#00f000" stroke="#308030" /><path d="M4 7c1-3 4-4 7-3" stroke="#a0ffa0" fill="none" strokeWidth="2" /></svg>
        </div>
        <div className="flex w-[19px] items-center justify-center border border-t-[#707070] border-l-[#808080] border-r-white border-b-transparent">
          <svg width="8" height="18" viewBox="0 0 8 18"><path d="M1.500 1h5l-1 10h-3zM2 13h4v4H2z" /></svg>
        </div>
      </div>

      {/* Desktop panel */}
      <footer className="flex h-[27px] shrink-0 items-center border-t border-t-[#909090] bg-[#d6d6d6] pl-[7px] text-xs text-[#303030]">
        <button type="button" className="flex w-[66px] items-center gap-[5px]">
          <svg width="21" height="20" viewBox="0 0 21 20" className="shrink-0">
            <path d="M1 1h13c4 0 6 2 6 6v11H9c-4 0-5-2-5-5V6H1z" fill="#8fce56" stroke="#fff" />
            <path d="M7 5v7c0 2 1 3 3 3h4c2 0 3-1 3-3V9c0-3-4-3-4 0v3M13 9c0-3-3-3-3 0v3" fill="none" stroke="#fff" strokeWidth="1.600" />
          </svg>
          Menu
        </button>
        <button type="button" aria-label="Show desktop" className="flex h-[22px] w-[22px] items-center justify-center rounded-[3px] border border-[#a8a8a8] bg-[#ececec]">
          <svg width="18" height="16" viewBox="0 0 18 16"><rect x="1" y="1" width="16" height="14" rx="1" fill="#555" /><path d="M3 5h12v5H3z" fill="#8db86a" /><path d="M3 11h12v3H3z" fill="#9fb78c" /></svg>
        </button>
        <div className="mx-1 h-6 w-px bg-[#b0b0b0]"></div>
        <div className="flex items-center gap-[3px]">
          <button type="button" aria-label="Files" className="ml-[3px]">
            <svg width="22" height="22" viewBox="0 0 22 22"><rect x="1" y="1" width="20" height="20" rx="2" fill="#8c8c8c" stroke="#666" /><path d="M5 3h12v12H5z" fill="#b8b8b8" stroke="#555" /><path d="M7 5h8v5H7z" fill="#eee" stroke="#555" /><path d="M9 6h4v3H9z" fill="#69a" /><path d="M4 17.500h14" stroke="#ddd" /></svg>
          </button>
          <button type="button" aria-label="Terminal">
            <svg width="20" height="20" viewBox="0 0 20 20"><rect x="1" y="1" width="18" height="18" rx="1" fill="#22222a" stroke="#777" /><path d="M4 6l4 2.500L4 11M10 12h5" fill="none" stroke="#e8e8e8" strokeWidth="1.400" /></svg>
          </button>
          <button type="button" aria-label="Firefox">
            <svg width="21" height="21" viewBox="0 0 21 21"><rect width="21" height="21" fill="#e87818" /><circle cx="11" cy="10" r="8" fill="#2060a8" /><path d="M8 4c3-2 7-1 8 1l-3 1 2 3-4-1-2 2z" fill="#60b8e8" /><path d="M2 3c0 4 0 4 3 4l3 1-1 3c1 4 7 4 9 1-1 6-10 7-13 1C1 9 1 6 2 3z" fill="#f49018" /><path d="M17 3c3 4 3 10-1 14" stroke="#ffc830" strokeWidth="2" fill="none" /></svg>
          </button>
        </div>
        <div className="mx-1 flex w-[5px] flex-col gap-[2px]">
          <i className="h-px bg-[#aaa]"></i><i className="h-px bg-[#aaa]"></i><i className="h-px bg-[#aaa]"></i>
        </div>
        <div className="flex gap-[2px]">
          <TaskButton label="microphone"><path d="M7 4l9-1-1 7-3 2 3 2-4 3-4-1-4 1 2-4-1-2 3-2z" fill="#f00808" stroke="none" /></TaskButton>
          <TaskButton label="microphone.sch"><rect x="3.500" y="3.500" width="13" height="13" fill="#fff" stroke="#600008" strokeWidth="1.500" /><path d="M6 6.500h4v2H6zM12 6h3v3M6 12h3M8 14h4v-2h3" stroke="#900010" strokeWidth="1.300" /></TaskButton>
          <TaskButton label="microphone.brd" active><rect x="3.500" y="3.500" width="13" height="13" fill="#0a8a10" stroke="#063806" /><path d="M8 4h7v6H8z" fill="#ddd" stroke="#222" /><path d="M5 6v9M7 13h6" stroke="#f0f020" strokeDasharray="2 1" strokeWidth="1.500" /><path d="M13 13h3v3h-3z" fill="#e01010" stroke="none" /></TaskButton>
          <TaskButton label="hello.mic.45.png (173..."><circle cx="10" cy="10" r="7" fill="#5a8ee8" stroke="none" /><path d="M4 7a7 7 0 0 1 12 0H10" fill="#86b0f0" stroke="none" /><circle cx="10" cy="10" r="3" fill="#3468c8" stroke="#e8f0ff" strokeWidth="1.500" /></TaskButton>
        </div>
        <div className="ml-auto flex items-center gap-[5px] pr-[11px]">
          <div className="flex w-[5px] flex-col gap-[2px]"><i className="h-px bg-[#aaa]"></i><i className="h-px bg-[#aaa]"></i><i className="h-px bg-[#aaa]"></i></div>
          <Icon><path d="M10 1c3 2 5 2 8 2 0 8-2 13-8 16C4 16 2 11 2 3c3 0 5 0 8-2z" fill="#eee" stroke="#666" /><circle cx="10" cy="9.500" r="5.500" fill="#3878c0" stroke="none" /><path d="M10 6v1.500M10 9v4" stroke="#fff" strokeWidth="1.600" /></Icon>
          <Icon><path d="M4 17v-4M7.500 17v-6M11 17V8.500M14.500 17V6M17.500 17V4" stroke="#484848" strokeWidth="2.200" /></Icon>
          <Icon><rect x="3" y="0" width="14" height="20" rx="6" fill="#505050" stroke="none" /><path d="M6 6.500l8 7L10 17V3l4 3.500-8 7" stroke="#fff" strokeWidth="1.400" /></Icon>
          <Icon><path d="M2 8h3l4-4v12l-4-4H2z" fill="#404040" stroke="none" /><path d="M11 7c1 2 1 4 0 6M14 5c2 3 2 7 0 10M16.500 3c3 4 3 10 0 14" stroke="#404040" strokeWidth="1.500" /></Icon>
          <svg width="20" height="20" viewBox="0 0 20 20" className="ml-1"><rect x="2" y="5" width="14" height="10" rx="1" fill="#c8c8c8" stroke="#404040" strokeWidth="2" /><path d="M5 7h7v6H5z" fill="#a8a8a8" /><path d="M17 8h2v4h-2z" fill="#404040" /></svg>
          <time className="ml-px">Fri Apr 28, 10:26</time>
        </div>
      </footer>
    </div>
  );
}
